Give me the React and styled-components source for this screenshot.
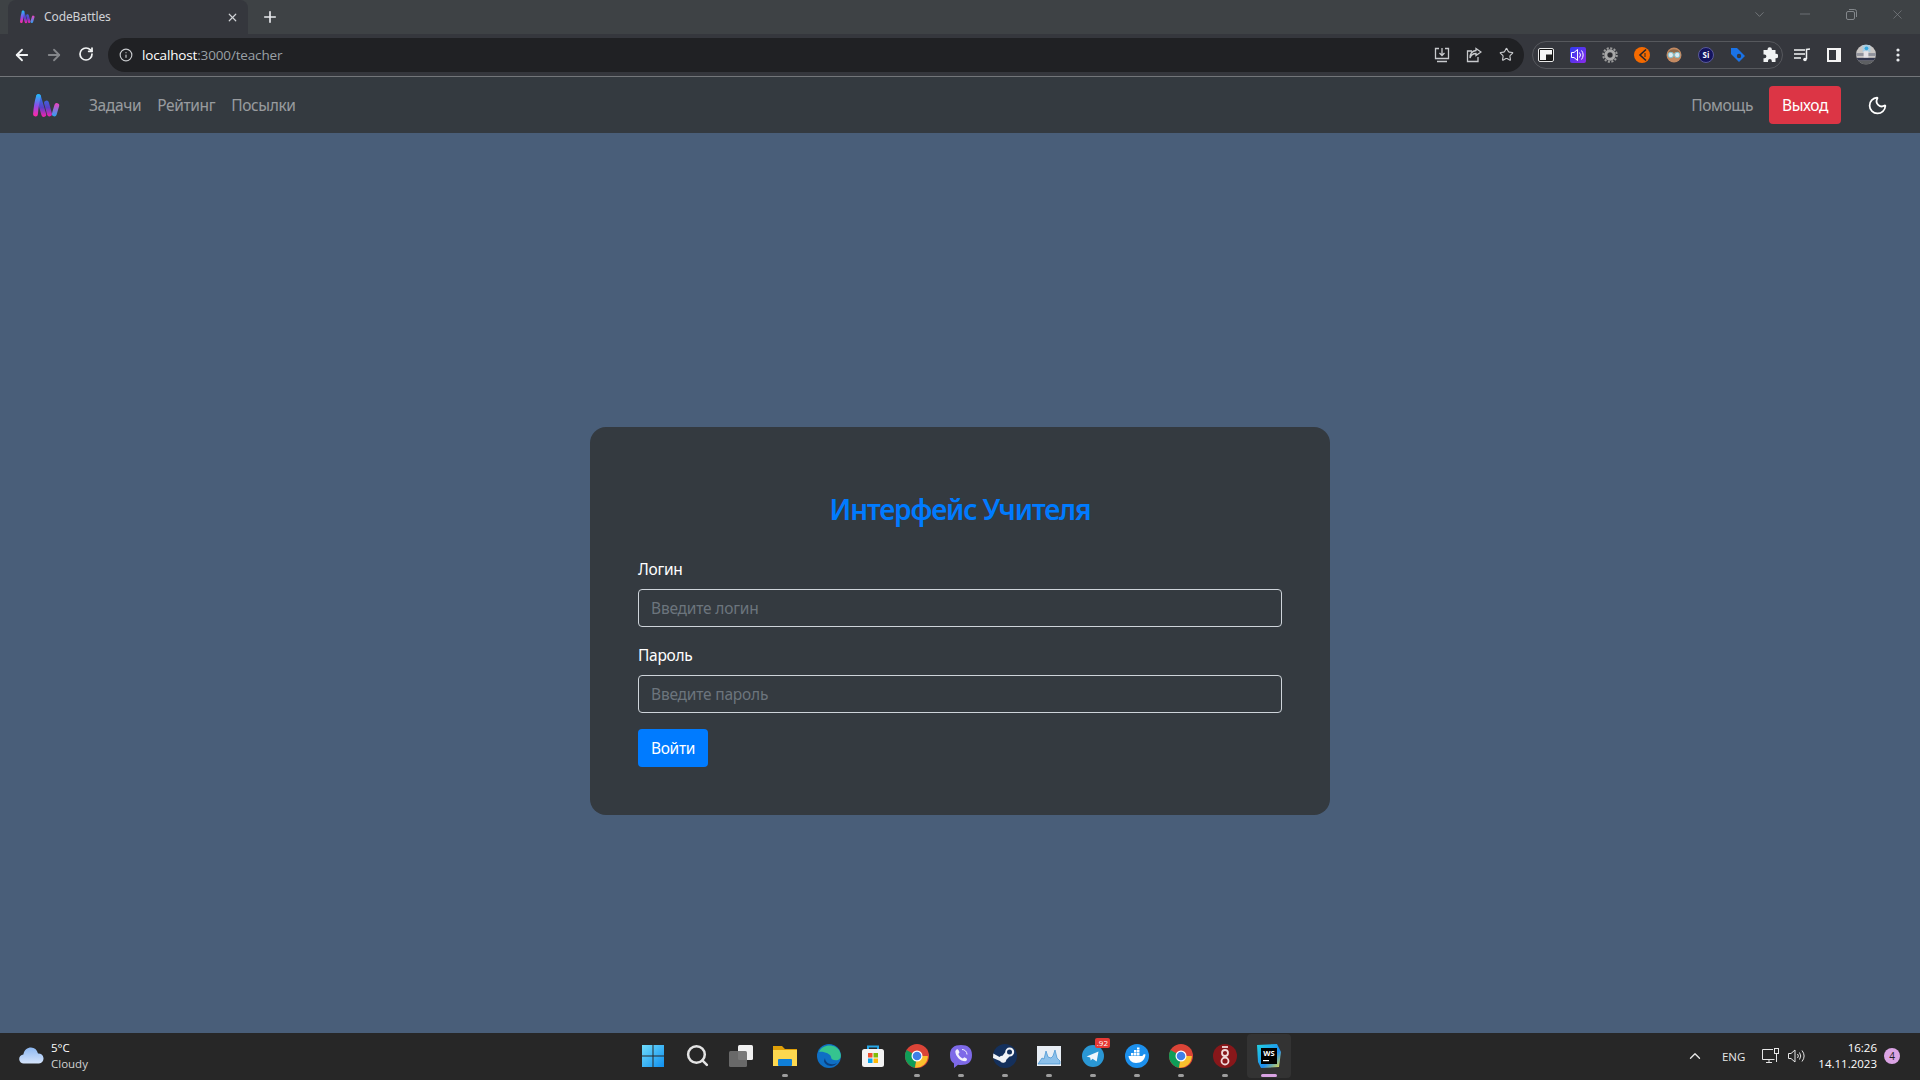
import React from "react";
import styled, { createGlobalStyle } from "styled-components";
import {
  ArrowLeft,
  ArrowRight,
  RotateCw,
  Info,
  Star,
  X,
  Plus,
  Minus,
  ChevronDown,
  ChevronUp,
  Moon,
  Search,
} from "lucide-react";

const GlobalStyle = createGlobalStyle`
  html, body {
    margin: 0;
    height: 100%;
    overflow: hidden;
    background: #495e79;
    font-family: "Noto Sans", "Open Sans", sans-serif;
  }
  #root {
    height: 100%;
  }
  * {
    box-sizing: border-box;
  }
`;

const Screen = styled.div`
  display: flex;
  flex-direction: column;
  height: 1080px;
`;

/* browser chrome */
const TabStrip = styled.div`
  display: flex;
  align-items: flex-start;
  height: 34px;
  background: #3e4245;
  padding-left: 8px;
  color: #dfe1e5;
`;

const Tab = styled.div`
  display: flex;
  align-items: center;
  width: 240px;
  height: 34px;
  padding: 0 9px 0 12px;
  background: #35373d;
  border-radius: 8px 8px 0 0;
  font-size: 12px;
  color: #d0d2d6;
`;

const TabTitle = styled.span`
  flex: 1;
  margin: -2px 0 0 9px;
  letter-spacing: -0.1px;
`;

const NewTab = styled.div`
  display: flex;
  margin-left: 13px;
  height: 34px;
  align-items: center;
  color: #e8eaed;
`;

const WindowControls = styled.div`
  display: flex;
  margin-left: auto;
  color: #83878b;
`;

const WindowButton = styled.div`
  display: flex;
  align-items: center;
  justify-content: center;
  width: 46px;
  height: 28px;
`;

const Toolbar = styled.div`
  display: flex;
  align-items: center;
  height: 43px;
  padding: 0 12px 1px 12px;
  background: #35373d;
  border-bottom: 1px solid #73767a;
  color: #e8eaed;
`;

const NavButtons = styled.div`
  display: flex;
  gap: 12px;
  margin-right: 12px;
`;

const NavButton = styled.div`
  display: flex;
  width: 20px;
  justify-content: center;
  color: ${(p) => (p.$off ? "#84868a" : "#f1f3f4")};
`;

const Omnibox = styled.div`
  display: flex;
  align-items: center;
  flex: 1;
  height: 34px;
  padding: 0 8px 0 11px;
  background: #202124;
  border-radius: 17px;
  font-family: "Open Sans", sans-serif;
  font-size: 13.5px;
`;

const Url = styled.span`
  margin-left: 9px;
  color: #fff;
  letter-spacing: -0.15px;
  span {
    color: #9aa0a6;
  }
`;

const OmniIcons = styled.div`
  display: flex;
  align-items: center;
  gap: 12px;
  margin-left: auto;
  color: #c8cacd;
`;

const ExtPill = styled.div`
  display: flex;
  flex-shrink: 0;
  align-items: center;
  gap: 12px;
  width: 251px;
  height: 28px;
  margin: 0 9px 0 8px;
  padding: 0 2px 0 3px;
  border: 1px solid #56585d;
  border-radius: 14px;
`;

const ToolGroup = styled.div`
  display: flex;
  align-items: center;
  gap: 12px;
`;

const IconSlot = styled.div`
  display: flex;
  flex-shrink: 0;
  align-items: center;
  justify-content: center;
  width: 20px;
  height: 20px;
`;

/* site navbar */
const Navbar = styled.nav`
  display: flex;
  align-items: center;
  height: 56px;
  padding: 0 32px 0 33px;
  background: #343a40;
`;

const NavLinks = styled.div`
  display: flex;
  gap: 16px;
  margin-left: 29px;
`;

const NavLink = styled.a`
  font-size: 15.5px;
  letter-spacing: -0.36px;
  color: rgba(255, 255, 255, 0.5);
`;

const NavRight = styled.div`
  display: flex;
  align-items: center;
  margin-left: auto;
`;

const LogoutButton = styled.button`
  width: 72px;
  height: 38px;
  margin: 0 26px 0 16px;
  border: 0;
  border-radius: 4px;
  background: #dc3545;
  color: #fff;
  font: inherit;
  font-size: 15.5px;
  letter-spacing: -0.42px;
`;

const ThemeToggle = styled.div`
  display: flex;
  color: #fff;
`;

/* page */
const Main = styled.main`
  display: flex;
  flex: 1;
  align-items: center;
  justify-content: center;
  padding-top: 76px;
  background: #495e79;
`;

const Card = styled.form`
  width: 740px;
  height: 388px;
  padding: 48px;
  background: #343a40;
  border-radius: 16px;
`;

const Title = styled.h1`
  margin: 17px 0 31px;
  font-size: 28px;
  line-height: 34px;
  font-weight: 600;
  text-align: center;
  letter-spacing: -1.15px;
  color: #007bff;
`;

const Field = styled.div`
  margin-bottom: 16px;
`;

const Label = styled.label`
  display: block;
  margin-bottom: 8px;
  font-size: 15.5px;
  line-height: 24px;
  letter-spacing: -0.3px;
  color: #fff;
`;

const Input = styled.input`
  display: block;
  width: 100%;
  height: 38px;
  padding: 6px 12px;
  background: transparent;
  border: 1px solid #ced4da;
  border-radius: 4px;
  font: inherit;
  font-size: 15.5px;
  letter-spacing: -0.2px;
  color: #fff;
  &::placeholder {
    color: #6c757d;
    opacity: 1;
  }
`;

const SubmitButton = styled.button`
  display: block;
  width: 70px;
  height: 38px;
  border: 0;
  border-radius: 4px;
  background: #007bff;
  color: #fff;
  font: inherit;
  font-size: 15.5px;
  letter-spacing: -0.3px;
`;

/* windows taskbar */
const Taskbar = styled.footer`
  display: grid;
  grid-template-columns: 1fr auto 1fr;
  align-items: center;
  height: 47px;
  padding: 0 0 2px 2px;
  background: #272727;
  color: #fff;
  font-family: "Open Sans", sans-serif;
`;

const Weather = styled.div`
  display: flex;
  align-items: center;
  gap: 7px;
  padding-left: 17px;
`;

const TwoLines = styled.div`
  display: flex;
  flex-direction: column;
  align-items: ${(p) => (p.$end ? "flex-end" : "flex-start")};
  font-size: 11.5px;
  line-height: 16px;
`;

const Dim = styled.span`
  color: #d2d2d2;
`;

const TaskIcons = styled.div`
  display: flex;
`;

const TaskItem = styled.div`
  position: relative;
  display: flex;
  align-items: center;
  justify-content: center;
  width: 44px;
  height: 44px;
  border-radius: 4px;
  background: ${(p) => (p.$active ? "#333333" : "transparent")};
  &::after {
    content: "";
    display: ${(p) => (p.$open || p.$active ? "block" : "none")};
    position: absolute;
    bottom: 1px;
    left: 50%;
    width: ${(p) => (p.$active ? "16px" : "6px")};
    height: 3px;
    margin-left: ${(p) => (p.$active ? "-8px" : "-3px")};
    border-radius: 2px;
    background: ${(p) => (p.$active ? "#d9a3e3" : "#9d9d9d")};
  }
`;

const CountBadge = styled.span`
  position: absolute;
  top: 4px;
  right: 5px;
  padding: 0 2px;
  border-radius: 2px;
  background: #e53935;
  font-size: 8px;
  line-height: 10px;
  color: #fff;
`;

const Tray = styled.div`
  display: flex;
  align-items: center;
  justify-content: flex-end;
  padding-right: 20px;
`;

const TrayLang = styled.span`
  margin: 2px 17px 0 18px;
  font-size: 11.5px;
  color: #e6e6e6;
`;

const TrayIcons = styled.div`
  display: flex;
  align-items: center;
  gap: 8px;
  margin-right: 13px;
`;

const NotifyBadge = styled.span`
  display: flex;
  align-items: center;
  justify-content: center;
  width: 16px;
  height: 16px;
  margin-left: 7px;
  border-radius: 50%;
  background: #dba4e4;
  font-size: 10px;
  color: #202020;
`;

function Logo({ width = 27, id = "a" }) {
  return (
    <svg width={width} height={(width * 25) / 27} viewBox="0 0 27 25" fill="none">
      <defs>
        <linearGradient id={`${id}1`} gradientUnits="userSpaceOnUse" x1="0" y1="2" x2="0" y2="23">
          <stop offset="0" stopColor="#25b5f5" />
          <stop offset="0.5" stopColor="#8a4fe8" />
          <stop offset="1" stopColor="#ff27a8" />
        </linearGradient>
        <linearGradient id={`${id}2`} gradientUnits="userSpaceOnUse" x1="0" y1="2" x2="0" y2="23">
          <stop offset="0" stopColor="#2a7fe8" />
          <stop offset="0.6" stopColor="#5a3fc8" />
          <stop offset="1" stopColor="#e825b0" />
        </linearGradient>
        <linearGradient id={`${id}3`} gradientUnits="userSpaceOnUse" x1="0" y1="10" x2="0" y2="23">
          <stop offset="0" stopColor="#f23fc0" />
          <stop offset="1" stopColor="#30a0f0" />
        </linearGradient>
      </defs>
      <path d="M5.500 3.500 10.800 21.500" stroke={`url(#${id}2)`} strokeWidth="4.800" strokeLinecap="round" />
      <path d="M2.500 21C3 15 3.800 9 5.500 3.500" stroke={`url(#${id}1)`} strokeWidth="4.800" strokeLinecap="round" />
      <path d="M13.500 10 16.500 21" stroke={`url(#${id}2)`} strokeWidth="4.800" strokeLinecap="round" />
      <path d="M23.800 12.500 21.300 21" stroke={`url(#${id}3)`} strokeWidth="4.800" strokeLinecap="round" />
    </svg>
  );
}

function Restore() {
  return (
    <svg width="11" height="11" viewBox="0 0 11 11" fill="none" stroke="currentColor">
      <rect x="0.5" y="2.500" width="8" height="8" rx="1.500" />
      <path d="M3 .5h5.500a2 2 0 0 1 2 2V8" />
    </svg>
  );
}

function DownloadBox() {
  return (
    <svg width="16" height="16" viewBox="0 0 16 16" fill="none" stroke="currentColor" strokeWidth="1.300">
      <path d="M5 1.500H1.500v10h13v-10H11M8 1v7M5.500 6 8 8.500 10.500 6M3 14.500h10" />
    </svg>
  );
}

function ShareBox() {
  return (
    <svg width="16" height="16" viewBox="0 0 16 16" fill="none" stroke="currentColor" strokeWidth="1.300">
      <path d="M6 4H1.500v10.500h10.500V10M10 1.500 15 5l-5 3.500V6.500C7 6.500 5 8 4 11c0-4 2-7 6-7.500z" />
    </svg>
  );
}

function PipIcon() {
  return (
    <svg width="16" height="14" viewBox="0 0 16 14">
      <rect x="0.500" y="0.500" width="15" height="13" rx="1.500" fill="#111" stroke="#e8e8e8" />
      <rect x="2" y="2" width="12" height="10" fill="#f6f6f6" />
      <rect x="8" y="6.500" width="6" height="5.500" fill="#1e1e1e" />
    </svg>
  );
}

function SoundExt() {
  return (
    <svg width="16" height="16" viewBox="0 0 16 16" fill="none">
      <defs>
        <linearGradient id="snd" x1="0" y1="0" x2="1" y2="1">
          <stop offset="0" stopColor="#2f3cf0" />
          <stop offset="1" stopColor="#8a2be8" />
        </linearGradient>
      </defs>
      <rect width="16" height="16" rx="2" fill="url(#snd)" />
      <path d="M1.500 5.500H4L7.500 2.500v11L4 10.500H1.500z" stroke="#fff" />
      <path d="M9.500 5.500a4 4 0 0 1 0 5M11.500 3.500a7 7 0 0 1 0 9" stroke="#fff" />
    </svg>
  );
}

function GearExt() {
  return (
    <svg width="16" height="16" viewBox="0 0 16 16" fill="none">
      <circle cx="8" cy="8" r="6.800" stroke="#9a9a9a" strokeWidth="2" strokeDasharray="2.100 1.460" />
      <circle cx="8" cy="8" r="4.200" stroke="#a8a8a8" strokeWidth="3" />
      <circle cx="8" cy="8" r="2" fill="#2a2a2e" />
    </svg>
  );
}

function OrangeExt() {
  return (
    <svg width="16" height="16" viewBox="0 0 16 16">
      <circle cx="8" cy="8" r="8" fill="#f56a00" />
      <path d="M12 2.500 6 8l6 5.500" fill="none" stroke="#26262a" strokeWidth="1.600" />
      <path d="M11 6v4" stroke="#26262a" />
    </svg>
  );
}

function FaceExt() {
  return (
    <svg width="16" height="16" viewBox="0 0 16 16">
      <circle cx="8" cy="8" r="7.500" fill="#c48a62" />
      <path d="M2 5.500C4 1 12 1 14 5.500z" fill="#8d6a4c" />
      <circle cx="4.800" cy="8" r="2.700" fill="#dfeaf0" stroke="#7fc0cc" />
      <circle cx="11.200" cy="8" r="2.700" fill="#dfeaf0" stroke="#7fc0cc" />
    </svg>
  );
}

function SiExt() {
  return (
    <svg width="16" height="16" viewBox="0 0 16 16">
      <circle cx="8" cy="8" r="7.500" fill="#14145e" stroke="#5a5a9a" />
      <text x="8" y="10.800" textAnchor="middle" fontSize="8" fontWeight="700" fill="#fff" fontFamily="Open Sans, sans-serif">Si</text>
    </svg>
  );
}

function TagExt() {
  return (
    <svg width="16" height="16" viewBox="0 0 16 16">
      <path d="M1 1h6l8 8-6 6-8-8z" fill="#1a73e8" />
      <circle cx="9" cy="9" r="2.200" fill="#35373d" />
    </svg>
  );
}

function PuzzleExt() {
  return (
    <svg width="16" height="16" viewBox="0 0 16 16" fill="#f1f3f4">
      <path d="M5.500 3V2.500a2.200 2.200 0 0 1 4.400 0V3H13.500v3.800H14a2.200 2.200 0 0 1 0 4.400h-.5V15H9.800v-1a1.900 1.900 0 0 0-3.800 0v1H1.500v-3.800H2.500a1.900 1.900 0 0 0 0-3.800H1.500V3z" />
    </svg>
  );
}

function MediaIcon() {
  return (
    <svg width="16" height="16" viewBox="0 0 16 16" fill="none" stroke="#f1f3f4" strokeWidth="1.500">
      <path d="M0 3h11M0 7h11M0 11h7M12.500 12V2.500L16 2" />
      <circle cx="11" cy="12.500" r="1.800" fill="#f1f3f4" stroke="none" />
    </svg>
  );
}

function SidePanelIcon() {
  return (
    <svg width="14" height="14" viewBox="0 0 14 14">
      <rect width="14" height="14" fill="#f4f4f4" />
      <rect x="2" y="2" width="7" height="10" fill="#35373d" />
    </svg>
  );
}

function AvatarIcon() {
  return (
    <svg width="21" height="21" viewBox="0 0 21 21">
      <defs>
        <clipPath id="av">
          <circle cx="10.500" cy="10.500" r="10.500" />
        </clipPath>
      </defs>
      <g clipPath="url(#av)">
        <rect width="21" height="21" fill="#c9c6c4" />
        <rect x="7" width="8" height="8" fill="#a9cde0" />
        <circle cx="11" cy="4" r="2" fill="#35a8e0" />
        <rect x="0" y="9" width="21" height="3" fill="#8f929c" />
        <rect x="8" y="7" width="5" height="8" fill="#e4e2e6" />
        <rect x="0" y="14" width="21" height="3" fill="#33384f" />
        <rect x="0" y="17" width="21" height="4" fill="#5d5f62" />
      </g>
    </svg>
  );
}

function Dots() {
  return (
    <svg width="4" height="14" viewBox="0 0 4 14" fill="#e8eaed">
      <circle cx="2" cy="2" r="1.600" />
      <circle cx="2" cy="7" r="1.600" />
      <circle cx="2" cy="12" r="1.600" />
    </svg>
  );
}

function Cloud() {
  return (
    <svg width="25" height="17" viewBox="0 0 25 17">
      <defs>
        <linearGradient id="cl" x1="0" y1="0" x2="0" y2="1">
          <stop offset="0" stopColor="#8db8f2" />
          <stop offset="1" stopColor="#d5e4fb" />
        </linearGradient>
      </defs>
      <path d="M5 16.500a4.500 4.500 0 0 1-.6-9C5 3 8.500.5 12 .5c3.500 0 6 2 7 6a5 5 0 0 1 1 10z" fill="url(#cl)" />
    </svg>
  );
}

function StartIcon() {
  return (
    <svg width="24" height="24" viewBox="0 0 24 24">
      <defs>
        <linearGradient id="win" x1="0" y1="0" x2="1" y2="1">
          <stop offset="0" stopColor="#6fdcfb" />
          <stop offset="1" stopColor="#0f8fef" />
        </linearGradient>
      </defs>
      <path d="M1 1h10.500v10.500H1zM12.500 1H23v10.500H12.500zM1 12.500h10.500V23H1zM12.500 12.500H23V23H12.500z" fill="url(#win)" />
    </svg>
  );
}

function TaskViewIcon() {
  return (
    <svg width="24" height="24" viewBox="0 0 24 24">
      <rect x="9" y="1" width="15" height="15" rx="1.500" fill="#f0f0f0" />
      <rect x="0" y="7" width="18" height="16" rx="1.500" fill="#6f6f6f" fillOpacity="0.93" />
    </svg>
  );
}

function FolderIcon() {
  return (
    <svg width="24" height="24" viewBox="0 0 24 24">
      <path d="M0 2h9l3 3h12v4H0z" fill="#e0a008" />
      <rect y="6" width="24" height="16" fill="#fdd84f" />
      <rect x="5" y="15" width="14" height="7" rx="1" fill="#0f7fd8" />
    </svg>
  );
}

function EdgeIcon() {
  return (
    <svg width="24" height="24" viewBox="0 0 24 24">
      <circle cx="12" cy="12" r="12" fill="#0f6fc4" />
      <path d="M2 8C5 0 19-1 23 8c1.500 4 1 7-2 8-3 .8-7 0-7-3 0-3-8-6-12-5z" fill="#35c48f" />
      <path d="M8 14c0 5 6 8 12 5-4 5-12 3-13-2z" fill="#0b3f7d" />
    </svg>
  );
}

function StoreIcon() {
  return (
    <svg width="24" height="24" viewBox="0 0 24 24" fill="none">
      <path d="M7 5V2.500h10V5" stroke="#27a7e8" strokeWidth="2" />
      <rect x="1" y="5" width="22" height="18" rx="2.500" fill="#f3f3f3" />
      <rect x="7" y="9" width="4.500" height="4.500" fill="#f05030" />
      <rect x="12.500" y="9" width="4.500" height="4.500" fill="#80bc06" />
      <rect x="7" y="14.500" width="4.500" height="4.500" fill="#05a5f0" />
      <rect x="12.500" y="14.500" width="4.500" height="4.500" fill="#ffba08" />
    </svg>
  );
}

function ChromeIcon() {
  return (
    <svg width="24" height="24" viewBox="0 0 24 24">
      <circle cx="12" cy="12" r="12" fill="#db4437" />
      <path d="M12 12 1.600 6A12 12 0 0 0 10 23.800z" fill="#0f9d58" />
      <path d="M12 12h10.900A12 12 0 0 1 10 23.800z" fill="#fbc02d" />
      <circle cx="12" cy="12" r="5.500" fill="#fff" />
      <circle cx="12" cy="12" r="4.300" fill="#3f7fe8" />
    </svg>
  );
}

function ViberIcon() {
  return (
    <svg width="24" height="24" viewBox="0 0 24 24" fill="none">
      <path d="M12 1c7 0 11 3 11 10s-4 10-11 10c-1 0-2 0-3-.2L5 24v-4.500C2 18 1 15 1 11 1 4 5 1 12 1z" fill="#7e6ae8" />
      <path d="M7 6c1-1 2-1 3 1l.5 1.500-1.200 1.500c1 2 2.500 3.500 4.500 4.500l1.500-1.200 2 1c1.500 1 .5 2.500-1 3-5 0-10-5-10-10z" fill="#f2f0fd" />
      <path d="M13 5.500a5 5 0 0 1 5 5" stroke="#f2f0fd" />
    </svg>
  );
}

function SteamIcon() {
  return (
    <svg width="24" height="24" viewBox="0 0 24 24">
      <circle cx="12" cy="12" r="12" fill="#14305c" />
      <path d="M0 14l7 3a3.500 3.500 0 0 0 6.500-1.500l3-3a4.500 4.500 0 1 0-4.300-4.300l-2.700 3.500A3.500 3.500 0 0 0 6.500 13L.3 9.500z" fill="#f1f3f6" />
      <circle cx="16.500" cy="8" r="2.500" fill="#14305c" />
    </svg>
  );
}

function MonitorIcon() {
  return (
    <svg width="24" height="20" viewBox="0 0 24 20">
      <rect width="24" height="20" fill="#e8eef5" />
      <path d="M1 18 5 12l2 1 2-8 2 6 3 1 2-2 2-6 2 8 3 3v3z" fill="#8cc0ea" stroke="#3f8fd0" strokeWidth="0.700" />
    </svg>
  );
}

function TelegramIcon() {
  return (
    <svg width="22" height="22" viewBox="0 0 24 24">
      <circle cx="12" cy="12" r="12" fill="#2a97d4" />
      <path d="M5 12.500 18 7l-2 11-4.500-3-2 2-.6-3.500z" fill="#f0f6fb" />
    </svg>
  );
}

function DockerIcon() {
  return (
    <svg width="24" height="24" viewBox="0 0 24 24">
      <circle cx="12" cy="12" r="12" fill="#1c90ed" />
      <path d="M3.500 12h14c.5-1.500 1.500-2 3-1.500-.5 5-4 8.500-9.500 8.500-4.500 0-7-3-7.500-7z" fill="#fff" />
      <path d="M6 9h2.500v2.500H6zM9 9h2.500v2.500H9zM12 9h2.500v2.500H12zM9 6h2.500v2.500H9zM12 6h2.500v2.500H12zM12 3.500h2.500V5.500H12z" fill="#fff" />
    </svg>
  );
}

function WireguardIcon() {
  return (
    <svg width="24" height="24" viewBox="0 0 24 24" fill="none">
      <circle cx="12" cy="12" r="12" fill="#88171a" />
      <circle cx="12" cy="17" r="3.500" stroke="#f0dada" strokeWidth="1.800" />
      <circle cx="12" cy="9" r="3" stroke="#f0dada" strokeWidth="1.800" />
      <path d="M9 3h6" stroke="#f0dada" strokeWidth="1.800" />
    </svg>
  );
}

function WebstormIcon() {
  return (
    <svg width="24" height="24" viewBox="0 0 24 24">
      <defs>
        <linearGradient id="ws" x1="0" y1="0" x2="1" y2="1">
          <stop offset="0" stopColor="#22d3e0" />
          <stop offset="0.6" stopColor="#1d8df0" />
          <stop offset="1" stopColor="#f4e03a" />
        </linearGradient>
      </defs>
      <path d="M0 1 20 0l4 8-2 15-18 1-3-6z" fill="url(#ws)" />
      <rect x="4" y="4" width="16" height="16" fill="#000" />
      <text x="12" y="12" textAnchor="middle" fontSize="7.500" fontWeight="700" fill="#fff" fontFamily="Open Sans, sans-serif">WS</text>
      <rect x="6" y="16" width="6" height="1.200" fill="#fff" />
    </svg>
  );
}

function NetworkIcon() {
  return (
    <svg width="18" height="16" viewBox="0 0 18 16" fill="none" stroke="#e6e6e6">
      <path d="M11 1.500H.5v10h12M4 14.500h6M7 11.500v3" />
      <rect x="12.500" y=".5" width="4" height="5" />
      <path d="M14.500 5.500v8.500" />
    </svg>
  );
}

function SpeakerIcon() {
  return (
    <svg width="17" height="14" viewBox="0 0 17 14" fill="none" stroke="#e6e6e6">
      <path d="M.5 4.500H3L7 1v12L3 9.500H.5z" />
      <path d="M9.500 5a3 3 0 0 1 0 4M11.500 3.500a6 6 0 0 1 0 7M14 1.500a9 9 0 0 1 0 11" />
    </svg>
  );
}

const taskItems = [
  { key: "start", icon: <StartIcon /> },
  { key: "search", icon: <Search size={25} color="#e4e4e4" strokeWidth={2.4} /> },
  { key: "view", icon: <TaskViewIcon /> },
  { key: "files", icon: <FolderIcon />, open: true },
  { key: "edge", icon: <EdgeIcon /> },
  { key: "store", icon: <StoreIcon /> },
  { key: "chrome", icon: <ChromeIcon />, open: true },
  { key: "viber", icon: <ViberIcon />, open: true },
  { key: "steam", icon: <SteamIcon />, open: true },
  { key: "monitor", icon: <MonitorIcon />, open: true },
  { key: "telegram", icon: <TelegramIcon />, open: true, badge: ".92" },
  { key: "docker", icon: <DockerIcon />, open: true },
  { key: "chrome2", icon: <ChromeIcon />, open: true },
  { key: "wg", icon: <WireguardIcon />, open: true },
  { key: "ws", icon: <WebstormIcon />, active: true },
];

export default function App() {
  return (
    <Screen>
      <GlobalStyle />
      <TabStrip>
        <Tab>
          <Logo width={15} id="f" />
          <TabTitle>CodeBattles</TabTitle>
          <X size={13} strokeWidth={2.2} />
        </Tab>
        <NewTab>
          <Plus size={18} strokeWidth={2.2} />
        </NewTab>
        <WindowControls>
          <WindowButton><ChevronDown size={15} strokeWidth={1.2} /></WindowButton>
          <WindowButton><Minus size={16} strokeWidth={1} /></WindowButton>
          <WindowButton><Restore /></WindowButton>
          <WindowButton><X size={15} strokeWidth={1} /></WindowButton>
        </WindowControls>
      </TabStrip>

      <Toolbar>
        <NavButtons>
          <NavButton><ArrowLeft size={18} strokeWidth={2.4} /></NavButton>
          <NavButton $off><ArrowRight size={18} strokeWidth={2.4} /></NavButton>
          <NavButton><RotateCw size={16} strokeWidth={2.6} /></NavButton>
        </NavButtons>
        <Omnibox>
          <Info size={14} color="#c8cacd" />
          <Url>localhost<span>:3000/teacher</span></Url>
          <OmniIcons>
            <IconSlot><DownloadBox /></IconSlot>
            <IconSlot><ShareBox /></IconSlot>
            <IconSlot><Star size={15} strokeWidth={1.8} /></IconSlot>
          </OmniIcons>
        </Omnibox>
        <ExtPill>
          <IconSlot><PipIcon /></IconSlot>
          <IconSlot><SoundExt /></IconSlot>
          <IconSlot><GearExt /></IconSlot>
          <IconSlot><OrangeExt /></IconSlot>
          <IconSlot><FaceExt /></IconSlot>
          <IconSlot><SiExt /></IconSlot>
          <IconSlot><TagExt /></IconSlot>
          <IconSlot><PuzzleExt /></IconSlot>
        </ExtPill>
        <ToolGroup>
          <IconSlot><MediaIcon /></IconSlot>
          <IconSlot><SidePanelIcon /></IconSlot>
          <IconSlot><AvatarIcon /></IconSlot>
          <IconSlot><Dots /></IconSlot>
        </ToolGroup>
      </Toolbar>

      <Navbar>
        <Logo id="n" />
        <NavLinks>
          <NavLink>Задачи</NavLink>
          <NavLink>Рейтинг</NavLink>
          <NavLink>Посылки</NavLink>
        </NavLinks>
        <NavRight>
          <NavLink>Помощь</NavLink>
          <LogoutButton type="button">Выход</LogoutButton>
          <ThemeToggle><Moon size={21} strokeWidth={2} /></ThemeToggle>
        </NavRight>
      </Navbar>

      <Main>
        <Card onSubmit={(e) => e.preventDefault()}>
          <Title>Интерфейс Учителя</Title>
          <Field>
            <Label htmlFor="login">Логин</Label>
            <Input id="login" placeholder="Введите логин" />
          </Field>
          <Field>
            <Label htmlFor="password">Пароль</Label>
            <Input id="password" type="password" placeholder="Введите пароль" />
          </Field>
          <SubmitButton type="submit">Войти</SubmitButton>
        </Card>
      </Main>

      <Taskbar>
        <Weather>
          <Cloud />
          <TwoLines>
            <span>5°C</span>
            <Dim>Cloudy</Dim>
          </TwoLines>
        </Weather>
        <TaskIcons>
          {taskItems.map((item) => (
            <TaskItem key={item.key} $open={item.open} $active={item.active}>
              {item.icon}
              {item.badge && <CountBadge>{item.badge}</CountBadge>}
            </TaskItem>
          ))}
        </TaskIcons>
        <Tray>
          <ChevronUp size={18} color="#e6e6e6" strokeWidth={1.8} />
          <TrayLang>ENG</TrayLang>
          <TrayIcons>
            <NetworkIcon />
            <SpeakerIcon />
          </TrayIcons>
          <TwoLines $end>
            <span>16:26</span>
            <span>14.11.2023</span>
          </TwoLines>
          <NotifyBadge>4</NotifyBadge>
        </Tray>
      </Taskbar>
    </Screen>
  );
}
